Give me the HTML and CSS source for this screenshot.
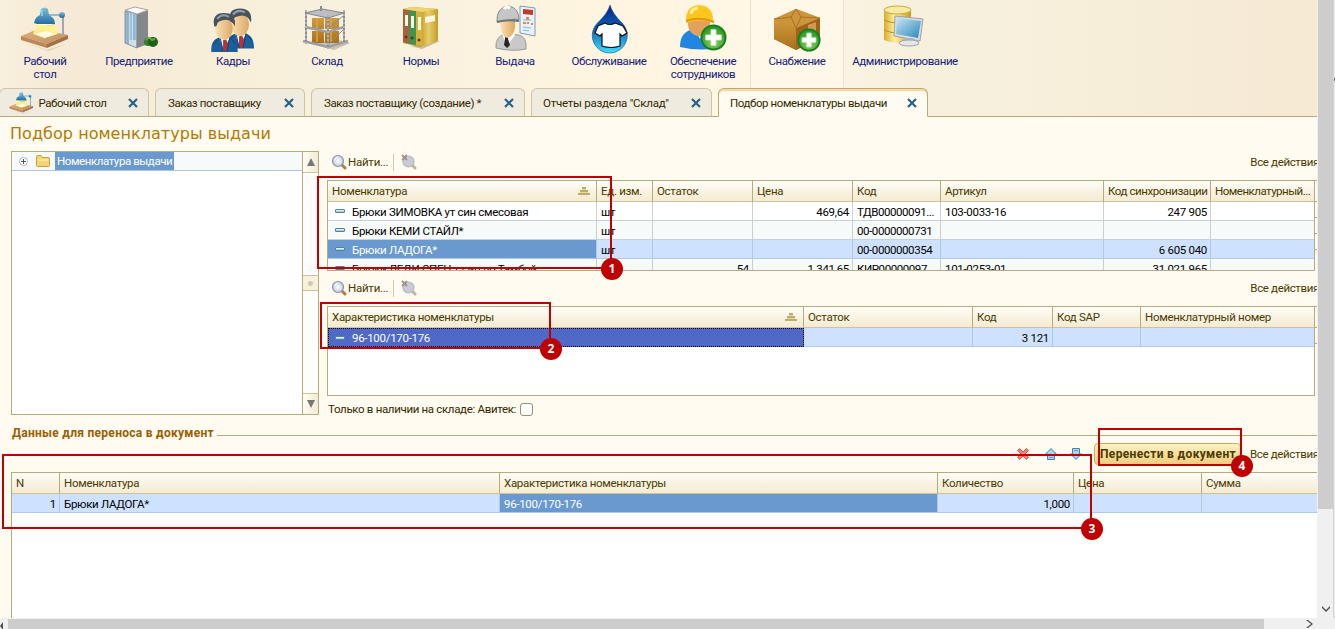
FILE: index.html
```html
<!DOCTYPE html>
<html lang="ru">
<head>
<meta charset="utf-8">
<title>Подбор номенклатуры выдачи</title>
<link rel="stylesheet" href="styles.css">
</head>
<body>
<svg class="defs" width="0" height="0" aria-hidden="true">
  <defs>
    <linearGradient id="blue" x1="0" y1="0" x2="0" y2="1"><stop offset="0" stop-color="#7cc0e2"/><stop offset="1" stop-color="#18659a"/></linearGradient>
    <linearGradient id="wood" x1="0" y1="0" x2="1" y2="1"><stop offset="0" stop-color="#ddb184"/><stop offset="1" stop-color="#c08e5e"/></linearGradient>
    <linearGradient id="glass" x1="0" y1="0" x2="1" y2="0"><stop offset="0" stop-color="#86a9c4"/><stop offset=".5" stop-color="#d9ecf6"/><stop offset="1" stop-color="#8fb2c8"/></linearGradient>
    <linearGradient id="gold" x1="0" y1="0" x2="1" y2="0"><stop offset="0" stop-color="#d8ae2c"/><stop offset=".4" stop-color="#fff0a0"/><stop offset="1" stop-color="#c99c1c"/></linearGradient>
    <linearGradient id="box" x1="0" y1="0" x2="0" y2="1"><stop offset="0" stop-color="#d19a3c"/><stop offset="1" stop-color="#a8701c"/></linearGradient>
    <linearGradient id="drop" x1="0" y1="0" x2="0" y2="1"><stop offset="0" stop-color="#06257e"/><stop offset=".5" stop-color="#0a62bb"/><stop offset="1" stop-color="#3fe0f8"/></linearGradient>
    <linearGradient id="skin" x1="0" y1="0" x2="1" y2="0"><stop offset="0" stop-color="#fbe2b4"/><stop offset="1" stop-color="#dca765"/></linearGradient>
    <linearGradient id="screen" x1="0" y1="0" x2="1" y2="1"><stop offset="0" stop-color="#c4e6f6"/><stop offset="1" stop-color="#2d87ba"/></linearGradient>
    <radialGradient id="plus" cx=".5" cy=".7" r=".6"><stop offset="0" stop-color="#8ad060"/><stop offset="1" stop-color="#2f9a28"/></radialGradient>
    <radialGradient id="lens"><stop offset="0" stop-color="#fff"/><stop offset="1" stop-color="#b5d0ee"/></radialGradient>
    <symbol id="i-desk" viewBox="0 0 50 44">
      <path d="M3 35l25 9 21-8-22 7z" fill="#d8cbb5"/>
      <path d="M1 29l17-7 30 6-21 9z" fill="url(#wood)"/><path d="M1 29l26 8v4L1 33z" fill="#bd8758"/><path d="M27 37l21-9v4L27 41z" fill="#a66f44"/>
      <path d="M17 16h17l4 11-14 4-11-4z" fill="#fff28a" opacity=".9"/><path d="M15 27l11-3 10 3-11 4z" fill="#fffde0"/>
      <path d="M27 8l15 0" stroke="#9cb7cc" stroke-width="2"/><path d="M43 9v20" stroke="#a2a7b4" stroke-width="2"/><circle cx="42" cy="8" r="3" fill="url(#blue)"/>
      <path d="M21 2q4-3 7 0l1 6q6 3 6 9-10 4-21-1 1-6 6-8z" fill="url(#blue)"/><path d="M22 3v6" stroke="#bfe4f5"/><path d="M15 17q9 4 20 0-10 0-20 0z" fill="#fffbd0"/>
    </symbol>
    <symbol id="i-plus" viewBox="0 0 28 28"><circle cx="14" cy="14" r="12.500" fill="url(#plus)" stroke="#16801b" stroke-width="2"/><path d="M11.500 6h5v5.500H22v5h-5.500V22h-5v-5.500H6v-5h5.500z" fill="#fff" stroke="#dff0da"/></symbol>
    <symbol id="i-man" viewBox="0 0 30 42"><path d="M1 42q-1-13 9-15h8q10 1 10 15z" fill="#1c5f9d"/><path d="M9 27l5 14 6-14z" fill="#fff"/><path d="M13 30l3-1 2 4-1 8h-4z" fill="#b93336"/><path d="M3 34l7-7 3 14M26 34l-6-7-3 14" fill="none" stroke="#104476"/><ellipse cx="14" cy="18" rx="9" ry="11.500" fill="url(#skin)"/><path d="M4 16Q1 2 14 2t11 14q-3-7-9-7-8 1-9 4 0 3-3 3z" fill="#49535d"/><path d="M7 8q5-6 12-2" fill="none" stroke="#92a0aa" stroke-width="2"/></symbol>
    <symbol id="i-close" viewBox="0 0 10 10"><path d="M1 1l8 8M9 1L1 9" stroke="#276289" stroke-width="2.200" fill="none"/></symbol>
    <symbol id="i-find" viewBox="0 0 16 16"><path d="M11 11l3 3" stroke="#b97942" stroke-width="3" stroke-linecap="round"/><circle cx="7" cy="7" r="5.500" fill="url(#lens)" stroke="#9a8c98" stroke-width="1.200"/><path d="M3.500 6q.5-3 3.500-3" fill="none" stroke="#fff"/></symbol>
    <symbol id="i-nofind" viewBox="0 0 16 16"><path d="M11 11l3 3" stroke="#c4b1a4" stroke-width="3" stroke-linecap="round"/><circle cx="7.500" cy="7.500" r="5.500" fill="#c5cdd6" stroke="#bab5b5" stroke-width="1.200"/><path d="M1 1l5 5M6 1L1 6" stroke="#a58e89" stroke-width="1.800"/></symbol>
    <symbol id="i-sort" viewBox="0 0 12 8"><path d="M4 0h4v2H4zM2 3h8v2H2zM0 6h12v2H0z" fill="#bcae67"/><path d="M4 2h4v1H4zM2 5h8v1H2z" fill="#e2d9ac"/></symbol>
    <symbol id="i-item" viewBox="0 0 10 4"><rect x=".5" y=".5" width="9" height="3" rx=".5" fill="#a9d0e4" stroke="#587f9e"/><path d="M1 1.500h8" stroke="#dceef5"/></symbol>
    <symbol id="i-arrow" viewBox="0 0 12 12"><path d="M6 .6L11.500 6H9.500v5.500h-7V6H.5z" fill="#a7d6f3" stroke="#4c81ab"/><path d="M4 9.500h4" stroke="#68a6d2"/></symbol>
  </defs>
</svg>

<div class="window">
  <div class="app">
    <header class="top">
      <nav class="sections">
        <a class="section"><svg class="pic" viewBox="0 0 54 50"><use href="#i-desk" x="2" y="7" width="50" height="44"/></svg><span>Рабочий<br>стол</span></a>
        <a class="section"><svg class="pic" viewBox="0 0 54 50"><path d="M34 44l14-3-8 6z" fill="#d3c9b3"/><path d="M13 10l10-3 13 3v34l-11 4-12-5z" fill="#b9bec2"/><path d="M13 11l12 3v34l-12-5z" fill="url(#glass)" stroke="#8298a6"/><path d="M16 12v32M19 13v32M22 14v32" stroke="#6f9dbf"/><path d="M25 14l11-4v34l-11 4z" fill="#84888a"/><path d="M13 10l10-3 13 3-11 4z" fill="#fafafa" stroke="#aaa"/><path d="M17 40h7v7l-7-3z" fill="#d7dee2"/><circle cx="36" cy="42" r="4" fill="#327f27"/><circle cx="41" cy="42" r="5" fill="#1d611b"/><path d="M34 40l3-2 3 2 3-1" stroke="#63ad3a" stroke-width="2"/></svg><span>Предприятие</span></a>
        <a class="section"><svg class="pic" viewBox="0 0 54 50"><use href="#i-man" x="20" y="6" width="30" height="43"/><use href="#i-man" x="4" y="11" width="30" height="41"/></svg><span>Кадры</span></a>
        <a class="section"><svg class="pic" viewBox="0 0 54 50"><path d="M8 43l26 7 16-7-15-4z" fill="#c9c0ad"/><g fill="url(#box)"><path d="M12 18h12v11H12zM25 18h14v11H25zM12 31h12v12H12zM25 31h14v12H25z"/></g><path d="M17 18v10M31 18v10M17 31v11M31 31v11" stroke="#dca64e" stroke-width="1.500"/><path d="M5 13l17-4 22 4-16 5z" fill="#bdbec3" stroke="#84858b"/><path d="M5 27l23 5 16-5M3 41l25 6 20-6" fill="none" stroke="#9c9ea6" stroke-width="2.500"/><path d="M6 10v34M28 15v34M44 10v33M21 6v5" stroke="#8a8d95" stroke-width="2"/><path d="M6 10v34M28 15v34M44 10v33" stroke="#d3d4d9" stroke-dasharray="2 2"/><path d="M29 28l14-12M29 44l14-14" stroke="#888c94"/></svg><span>Склад</span></a>
        <a class="section"><svg class="pic" viewBox="0 0 54 50"><path d="M16 46l12 3 18-8-8 1z" fill="#cbbd9d"/><path d="M9 9l9-2 26 2v32l-18 6-17-4z" fill="#c99f2c"/><path d="M9 9l6 1v34l-6-2z" fill="#a8603f"/><path d="M15 10l7 1v34l-7-1z" fill="#3f944e"/><path d="M22 11l6 1v34l-6-1z" fill="#d8b136"/><path d="M28 12l16-3v32l-16 5z" fill="url(#gold)"/><path d="M28 12l16-3v32l-16 5z" fill="#c49a2c" opacity=".4"/><path d="M9 9l9-2 26 2-16 3z" fill="#f0d474"/><path d="M11 15h3v11h-3zM17 16h3v12h-3zM24 17h3v13h-3zM31 17l10-2v6l-10 2z" fill="#faf6e4"/><g fill="#553a16"><circle cx="12" cy="37" r="1.500"/><circle cx="18" cy="38" r="1.500"/><circle cx="25" cy="40" r="1.500"/></g></svg><span>Нормы</span></a>
        <a class="section"><svg class="pic" viewBox="0 0 54 50"><path d="M32 6l15 2v28l-15-3z" fill="#e8f2f9" stroke="#7f9cb5"/><path d="M35 9l10 1v5l-10-1z" fill="#c03a2d"/><path d="M38 17h3v3h-3zM35 22h3v2h-3zM39 22h2v2h-2zM43 23h2v2h-2z" fill="#ed873f"/><path d="M35 27l8 1M35 30l6 1M35 20h8" stroke="#8fb8d4"/><path d="M8 48q-1-12 10-14l13 1q8 2 7 14-14 3-30-1z" fill="#c9c9c9" stroke="#999"/><path d="M14 34l5 12 8-11-2-3h-8z" fill="#fff"/><path d="M17 36h3v3l2 6-3 3-3-3 1-6z" fill="#252525"/><path d="M12 19h15v9q-2 9-8 10-5-1-6-10z" fill="url(#skin)"/><path d="M9 22Q8 7 21 6q10 2 10 14l-4-1z" fill="#c5c6c7" stroke="#8b8c8d"/><path d="M9 22q10-3 22-1" stroke="#717475" stroke-width="2" fill="none"/><path d="M16 9q2-3 6-1" stroke="#fff" stroke-width="3"/></svg><span>Выдача</span></a>
        <a class="section"><svg class="pic" viewBox="0 0 54 50"><path d="M28 5q2 8 12 18a17.500 17.500 0 1 1-24.500 0Q26 13 28 5z" fill="url(#drop)" stroke="#0a4aa0" stroke-width=".6"/><path d="M23 23q5 3 10 0l8 3 4 7-5 3-2-2v12q-9 3-18 0V34l-2 2-5-3 3-7z" fill="#fff" stroke="#111" stroke-width="1.200"/></svg><span>Обслуживание</span></a>
        <a class="section"><svg class="pic" viewBox="0 0 54 50"><path d="M4 47q0-17 16-18h10q14 2 16 18-20 5-42 0z" fill="#2185e2"/><path d="M19 30l5 9 8-9z" fill="#dbeefc"/><ellipse cx="23" cy="24" rx="11" ry="12" fill="#e4a15d"/><path d="M10 20q0-14 13-15 14 1 14 15l1 3q-14-5-28 0z" fill="#ffc51d"/><path d="M15 14q1-6 7-6" stroke="#fff391" stroke-width="3" fill="none"/><path d="M10 21q14-5 28 1" stroke="#df9815" stroke-width="2" fill="none"/><use href="#i-plus" x="24" y="24" width="27" height="27"/></svg><span>Обеспечение<br>сотрудников</span></a>
        <a class="section current"><svg class="pic" viewBox="0 0 54 50"><path d="M4 19L26 9l24 9v20L26 50 4 39z" fill="#b57c25"/><path d="M4 19l22 9v22L4 39z" fill="url(#box)"/><path d="M26 28l24-10v20L26 50z" fill="#9d641a"/><path d="M4 19L26 9l24 9-24 10z" fill="#cd953b"/><path d="M4 19l17-2 5-8 5 8 19 1M21 17l5 11 5-11" fill="none" stroke="#a97122"/><path d="M38 25l8-3v9l-8 3z" fill="#cd9b56"/><use href="#i-plus" x="27" y="28" width="24" height="24"/></svg><span>Снабжение</span></a>
        <a class="section wide"><svg class="pic" viewBox="0 0 54 50"><path d="M6 10v30q13 6 27 0V10z" fill="url(#gold)"/><ellipse cx="19.500" cy="10" rx="13.500" ry="4" fill="#f8eaa0" stroke="#c9a83d"/><path d="M6 20q13 6 27 0M6 30q13 6 27 0" fill="none" stroke="#b48f29"/><path d="M17 16l28 3-3 22-26-5z" fill="#d8dce0" stroke="#9ca3ab"/><path d="M19 18l24 3-3 17-22-4z" fill="url(#screen)"/><path d="M27 38h8v5h-8z" fill="#afb5ba"/><ellipse cx="31" cy="43" rx="10" ry="3" fill="#e4e7e9" stroke="#a1a6ab"/></svg><span>Администрирование</span></a>
      </nav>
      <div class="tabs">
        <div class="tab t1"><svg class="tabpic"><use href="#i-desk"/></svg><span>Рабочий стол</span><svg class="close"><use href="#i-close"/></svg></div>
        <div class="tab t2"><span>Заказ поставщику</span><svg class="close"><use href="#i-close"/></svg></div>
        <div class="tab t3"><span>Заказ поставщику (создание) *</span><svg class="close"><use href="#i-close"/></svg></div>
        <div class="tab t4"><span>Отчеты раздела "Склад"</span><svg class="close"><use href="#i-close"/></svg></div>
        <div class="tab t5 active"><span>Подбор номенклатуры выдачи</span><svg class="close"><use href="#i-close"/></svg></div>
      </div>
    </header>

    <main class="form">
      <h1>Подбор номенклатуры выдачи</h1>
      <div class="split">
        <section class="tree">
          <div class="treebody"><div class="node">
            <svg width="9" height="9"><circle cx="4.500" cy="4.500" r="4" fill="#fff" stroke="#b4b4b4"/><path d="M2 4.500h5M4.500 2v5" stroke="#555"/></svg>
            <svg class="folder" width="14" height="12"><path d="M.5 2q0-1.500 1.500-1.500h3L6.500 2.500H12q1.500 0 1.500 1.500v6.500q0 1-1 1h-11q-1 0-1-1z" fill="#f5d573" stroke="#c99f3c"/><path d="M1.500 5h11" stroke="#fff3bd"/></svg>
            <span class="nodename">Номенклатура выдачи</span></div></div>
          <div class="bar"><div class="barend"><svg width="8" height="8"><path d="M4 0l4 8H0z" fill="#777"/></svg></div><div class="thumb"><i></i></div><div class="barend"><svg width="8" height="8"><path d="M4 8L0 0h8z" fill="#777"/></svg></div></div>
        </section>
        <section class="lists">
          <div class="tools"><svg class="tool"><use href="#i-find"/></svg><span class="find">Найти...</span><i class="sep"></i><svg class="tool"><use href="#i-nofind"/></svg><span class="all">Все действия</span></div>
          <div class="listrow">
            <div class="grid items">
              <div class="tr th"><b>Номенклатура<svg class="sort"><use href="#i-sort"/></svg></b><b>Ед. изм.</b><b>Остаток</b><b>Цена</b><b>Код</b><b>Артикул</b><b class="snug">Код синхронизации</b><b class="tight">Номенклатурный...</b></div>
              <div class="tr"><div class="lead"><svg class="mark"><use href="#i-item"/></svg>Брюки ЗИМОВКА ут син смесовая</div><div>шт</div><div></div><div class="num">469,64</div><div class="snug">ТДВ00000091...</div><div>103-0033-16</div><div class="num">247 905</div><div></div></div>
              <div class="tr alt"><div class="lead"><svg class="mark"><use href="#i-item"/></svg>Брюки КЕМИ СТАЙЛ*</div><div>шт</div><div></div><div></div><div class="snug">00-0000000731</div><div></div><div></div><div></div></div>
              <div class="tr sel"><div class="lead picked"><svg class="mark"><use href="#i-item"/></svg>Брюки ЛАДОГА*</div><div>шт</div><div></div><div></div><div class="snug">00-0000000354</div><div></div><div class="num">6 605 040</div><div></div></div>
              <div class="tr alt"><div class="lead"><svg class="mark"><use href="#i-item"/></svg>Брюки ЛЕДИ СПЕЦ т.син.во Тамбой</div><div></div><div class="num">54</div><div class="num">1 341,65</div><div class="snug">КИР00000097...</div><div>101-0253-01</div><div class="num">31 021 965</div><div></div></div>
            </div>
            <div class="stub"><i></i><i></i><i></i><i></i></div>
          </div>
          <div class="tools second"><svg class="tool"><use href="#i-find"/></svg><span class="find">Найти...</span><i class="sep"></i><svg class="tool"><use href="#i-nofind"/></svg><span class="all">Все действия</span></div>
          <div class="listrow">
            <div class="grid traits">
              <div class="tr th"><b>Характеристика номенклатуры<svg class="sort"><use href="#i-sort"/></svg></b><b>Остаток</b><b>Код</b><b>Код SAP</b><b>Номенклатурный номер</b></div>
              <div class="tr sel"><div class="lead focus"><svg class="mark"><use href="#i-item"/></svg>96-100/170-176</div><div></div><div class="num">3 121</div><div></div><div></div></div>
            </div>
            <div class="stub"><i></i><i></i></div>
          </div>
          <label class="stock">Только в наличии на складе: Авитек:<span class="check"></span></label>
        </section>
      </div>
      <div class="legend"><h2>Данные для переноса в документ</h2></div>
      <div class="actions">
        <svg width="12" height="12"><path d="M.5 2.500l2-2L6 4 9.500.5l2 2L8 6l3.500 3.500-2 2L6 8l-3.500 3.500-2-2L4 6z" fill="#f78270" stroke="#e0584c"/></svg>
        <i class="sep s1"></i><svg width="12" height="12"><use href="#i-arrow"/></svg>
        <svg class="down" width="12" height="12"><use href="#i-arrow"/></svg><i class="sep s2"></i>
        <button>Перенести в документ</button><span>Все действия</span>
      </div>
      <div class="grid basket">
        <div class="tr th"><b>N</b><b>Номенклатура</b><b>Характеристика номенклатуры</b><b>Количество</b><b>Цена</b><b>Сумма</b></div>
        <div class="tr sel"><div class="num">1</div><div>Брюки ЛАДОГА*</div><div class="picked">96-100/170-176</div><div class="num">1,000</div><div></div><div></div></div>
      </div>
    </main>
  </div>
  <div class="vscroll"><svg width="8" height="6"><path d="M0 0l4 4 4-4v2L4 6 0 2z" fill="#505050"/></svg></div>
  <div class="edge"><i></i></div>
  <div class="hscroll"><div class="hthumb"></div><svg width="7" height="8"><path d="M0 0l5 4-5 4h2l5-4-5-4z" fill="#505050"/></svg></div>
  <svg class="left-arrow" width="3" height="8"><path d="M3 0L0 4l3 4z" fill="#505050"/></svg>

  <div class="callout c1"><span>1</span></div>
  <div class="callout c2"><span>2</span></div>
  <div class="callout c3"><span>3</span></div>
  <div class="callout c4"><span>4</span></div>
</div>
</body>
</html>
```
FILE: styles.css
```css
* { box-sizing: border-box; }
body { margin: 0; overflow: hidden; font: 11.5px/14px Roboto, "Liberation Sans", sans-serif; letter-spacing: -0.42px; color: #4b3a00; }
svg { display: block; flex: none; }
.defs { position: absolute; }
.window { position: relative; width: 1335px; height: 629px; display: grid; grid-template: 618px 11px / 1317px 16px 2px; background: #f0f0f0; overflow: hidden; }
.app { display: flex; flex-direction: column; overflow: hidden; background: #fffbf0; }

.top { height: 117px; display: flex; flex-direction: column; justify-content: space-between; border-bottom: 1px solid #b5ab7d; background: linear-gradient(90deg, #f8f0dc 0, #f6ead6 4%, #f6ead6 8%, #f7efd9 17%, #f7f1de 28%, #fbf3df 38%, #fff5e0 47%, #fff7e5 60%, #f6f0dd 69%, #f7f0dc 76%, #f6eed8 85%, #f6ead5 96%, #f6ead5 100%); }
.sections { display: flex; margin-left: -2px; height: 88px; }
.section { width: 94px; display: flex; flex-direction: column; align-items: center; text-align: center; line-height: 13px; color: #14207a; }
.section.wide { width: 122px; }
.section.current { background: #fff8e8; border: solid #ebe3cf; border-width: 0 1px; }
.pic { width: 54px; height: 50px; margin-bottom: 5px; overflow: visible; }
.tabs { display: flex; gap: 6px; margin-bottom: -1px; }
.tab { height: 29px; display: flex; align-items: center; justify-content: space-between; padding: 1px 10px 0 12px; border: 1px solid #b5ab7d; border-color: #cdc5a6 #cdc5a6 #b5ab7d; border-radius: 6px 6px 0 0; background: #f0ebdf; color: #352900; }
.tab span { white-space: nowrap; }
.t1 { width: 150px; margin-left: -1px; padding-left: 9px; }
.t1 span { margin-left: -17px; }
.t2 { width: 150px; }
.t3 { width: 214px; }
.t4 { width: 181px; padding-left: 11px; letter-spacing: -0.25px; }
.t5 { width: 210px; padding-left: 11px; }
.tab.active { background: #fffbf0; border-color: #b5ab7d #b5ab7d #fffbf0; box-shadow: inset 0 2px #ffd79c; }
.tabpic { width: 25px; height: 22px; }
.close { width: 10px; height: 10px; }

.form { flex: 1; display: flex; flex-direction: column; }
h1 { margin: 0; padding: 8px 10px 0; height: 34px; font: 16px/17px "DejaVu Sans", sans-serif; letter-spacing: 0.05px; color: #b07c00; }
.split { display: flex; gap: 8px; padding-left: 11px; height: 270px; }
.tree { width: 308px; height: 264px; display: flex; border: 1px solid #b5ab7d; background: #fff; }
.treebody { flex: 1; }
.node { height: 19px; display: flex; align-items: center; padding-left: 7px; background: #f6faf8; border-bottom: 1px solid #a9c8e8; }
.folder { margin: 0 5px 0 8px; }
.nodename { height: 18px; line-height: 19px; padding: 0 2px; background: #6a99cf; color: #fff; }
.bar { width: 16px; display: flex; flex-direction: column; border-left: 1px solid #b5ab7d; background: #fffdfa; }
.barend { height: 21px; display: flex; align-items: center; justify-content: center; background: linear-gradient(90deg, #fffdf4, #f3ead0); border-bottom: 1px solid #cdc49f; }
.barend:last-child { border-bottom: 0; border-top: 1px solid #cdc49f; }
.thumb { height: 16px; margin: 102px 0 auto; display: flex; align-items: center; justify-content: center; border: solid #cdc49f; border-width: 1px 0; background: #f8f1dd; }
.thumb i { width: 5px; height: 5px; border-radius: 3px; background: #d3c8a8; }

.lists { flex: 1; min-width: 0; }
.tools { height: 29px; display: flex; align-items: center; padding: 0 0 7px 4px; }
.tools.second { height: 35px; padding-bottom: 1px; }
.tool { width: 16px; height: 16px; }
.find { width: 39px; margin: 0 6px 0 1px; letter-spacing: -0.25px; }
.sep { width: 1px; height: 17px; margin-right: 7px; background: #d0c9ae; }
.all { margin-left: auto; margin-right: -2px; white-space: nowrap; letter-spacing: -0.35px; }
.listrow { display: flex; }
.grid { background: #fff; border: 1px solid #b5ab7d; overflow: hidden; white-space: nowrap; color: #000; }
.items { width: 988px; height: 91px; }
.traits { width: 988px; height: 90px; }
.tr { display: grid; height: 19px; line-height: 20px; letter-spacing: -0.3px; }
.items .tr { grid-template-columns: 269px 56px 100px 100px 88px 163px 107px 103px; }
.traits .tr { grid-template-columns: 476px 169px 80px 88px 173px; }
.tr > * { border: solid #c9d0d8; border-width: 0 1px 1px 0; padding: 0 4px; overflow: hidden; font-weight: 400; }
.tr > :last-child { border-right: 0; }
.tr .snug { letter-spacing: -0.42px; }
.tr .tight { letter-spacing: -0.5px; }
.th { height: 21px; line-height: 20px; background: linear-gradient(#fffdf8, #f8f3e2 50%, #f6ead0); color: #4b3a00; }
.th > * { border-color: #b5ab7d; display: flex; align-items: center; border-bottom-color: #cdc49f; }
.sort { width: 12px; height: 8px; margin-left: auto; margin-right: 2px; }
.alt { background: #f6faf8; }
.sel { background: #cee2ff; }
.sel > * { border-color: #afc9e6; }
.tr .lead { display: flex; align-items: center; padding: 1px 4px 0 7px; }
.mark { width: 10px; height: 4px; margin: 0 7px 1px 0; }
.tr .num { text-align: right; padding-right: 3px; }
.tr .picked { background: #6a99cf; color: #fff; }
.tr .focus { padding-left: 6px; background: #5068c6; color: #fff; border: 1px dotted #000; }
.stub { flex: 1; border-top: 1px solid #b5ab7d; padding-top: 20px; }
.stub i { display: block; height: 16px; border-top: 1px solid #b5ab7d; }
.stock { display: flex; align-items: center; margin-top: 6px; gap: 4px; padding-left: 1px; white-space: nowrap; letter-spacing: -0.33px; color: #352900; }
.check { width: 13px; height: 13px; border: 1px solid #958e72; border-radius: 3px; background: #fff; }

.legend { display: flex; align-items: center; gap: 3px; height: 24px; padding-left: 12px; }
.legend::after { content: ""; flex: 1; height: 1px; background: #b5ab7d; margin-top: 4px; }
h2 { margin: 0; font-size: 12px; line-height: 14px; letter-spacing: 0.28px; color: #996000; }
.actions { display: flex; align-items: center; height: 27px; padding: 0 0 9px 1017px; white-space: nowrap; }
.s1 { margin: 0 8px; }
.down { transform: rotate(180deg); margin-left: 13px; }
.s2 { margin: 0 4px 0 8px; }
button { flex: none; width: 147px; height: 22px; padding: 0 0 0 5px; border: 1px solid #d7a94b; border-radius: 4px; background: linear-gradient(#fdf1c8, #f5dc97 60%, #efcd80); font: bold 12px/18px Roboto, sans-serif; letter-spacing: 0.35px; color: #4b3a00; text-align: left; }
.actions span { margin-left: 9px; letter-spacing: -0.35px; }
.basket { margin-left: 11px; flex: 1; border-bottom: 0; border-right: 0; }
.basket .tr { grid-template-columns: 48px 440px 438px 136px 128px 116px; }

.vscroll { display: flex; flex-direction: column; justify-content: flex-end; align-items: center; padding-bottom: 6px; margin-left: 1px; background: linear-gradient(#cdcdcd 509px, #f0f0f0 509px); }
.edge { background: #e8e8e8; border-left: 1px solid #d4d4d4; padding-top: 78px; }
.edge i { display: block; height: 3px; background: #666; }
.hscroll { grid-column: 1 / 4; display: flex; align-items: center; justify-content: space-between; padding: 1px 22px 0 8px; }
.hthumb { width: 1256px; height: 10px; background: #cdcdcd; }
.left-arrow { position: absolute; left: 0; top: 622px; }

.callout { position: absolute; border: 2px solid #c00000; }
.callout span { position: absolute; right: -13px; bottom: -13px; width: 22px; height: 22px; border-radius: 50%; background: #c00000; color: #fff; font: bold 12px/22px "Open Sans", sans-serif; letter-spacing: 0; text-align: center; }
.c1 { left: 317px; top: 176px; width: 295px; height: 93px; }
.c2 { left: 320px; top: 302px; width: 231px; height: 47px; }
.c3 { left: 2px; top: 454px; width: 1090px; height: 75px; }
.c4 { left: 1098px; top: 428px; width: 144px; height: 38px; }
```
